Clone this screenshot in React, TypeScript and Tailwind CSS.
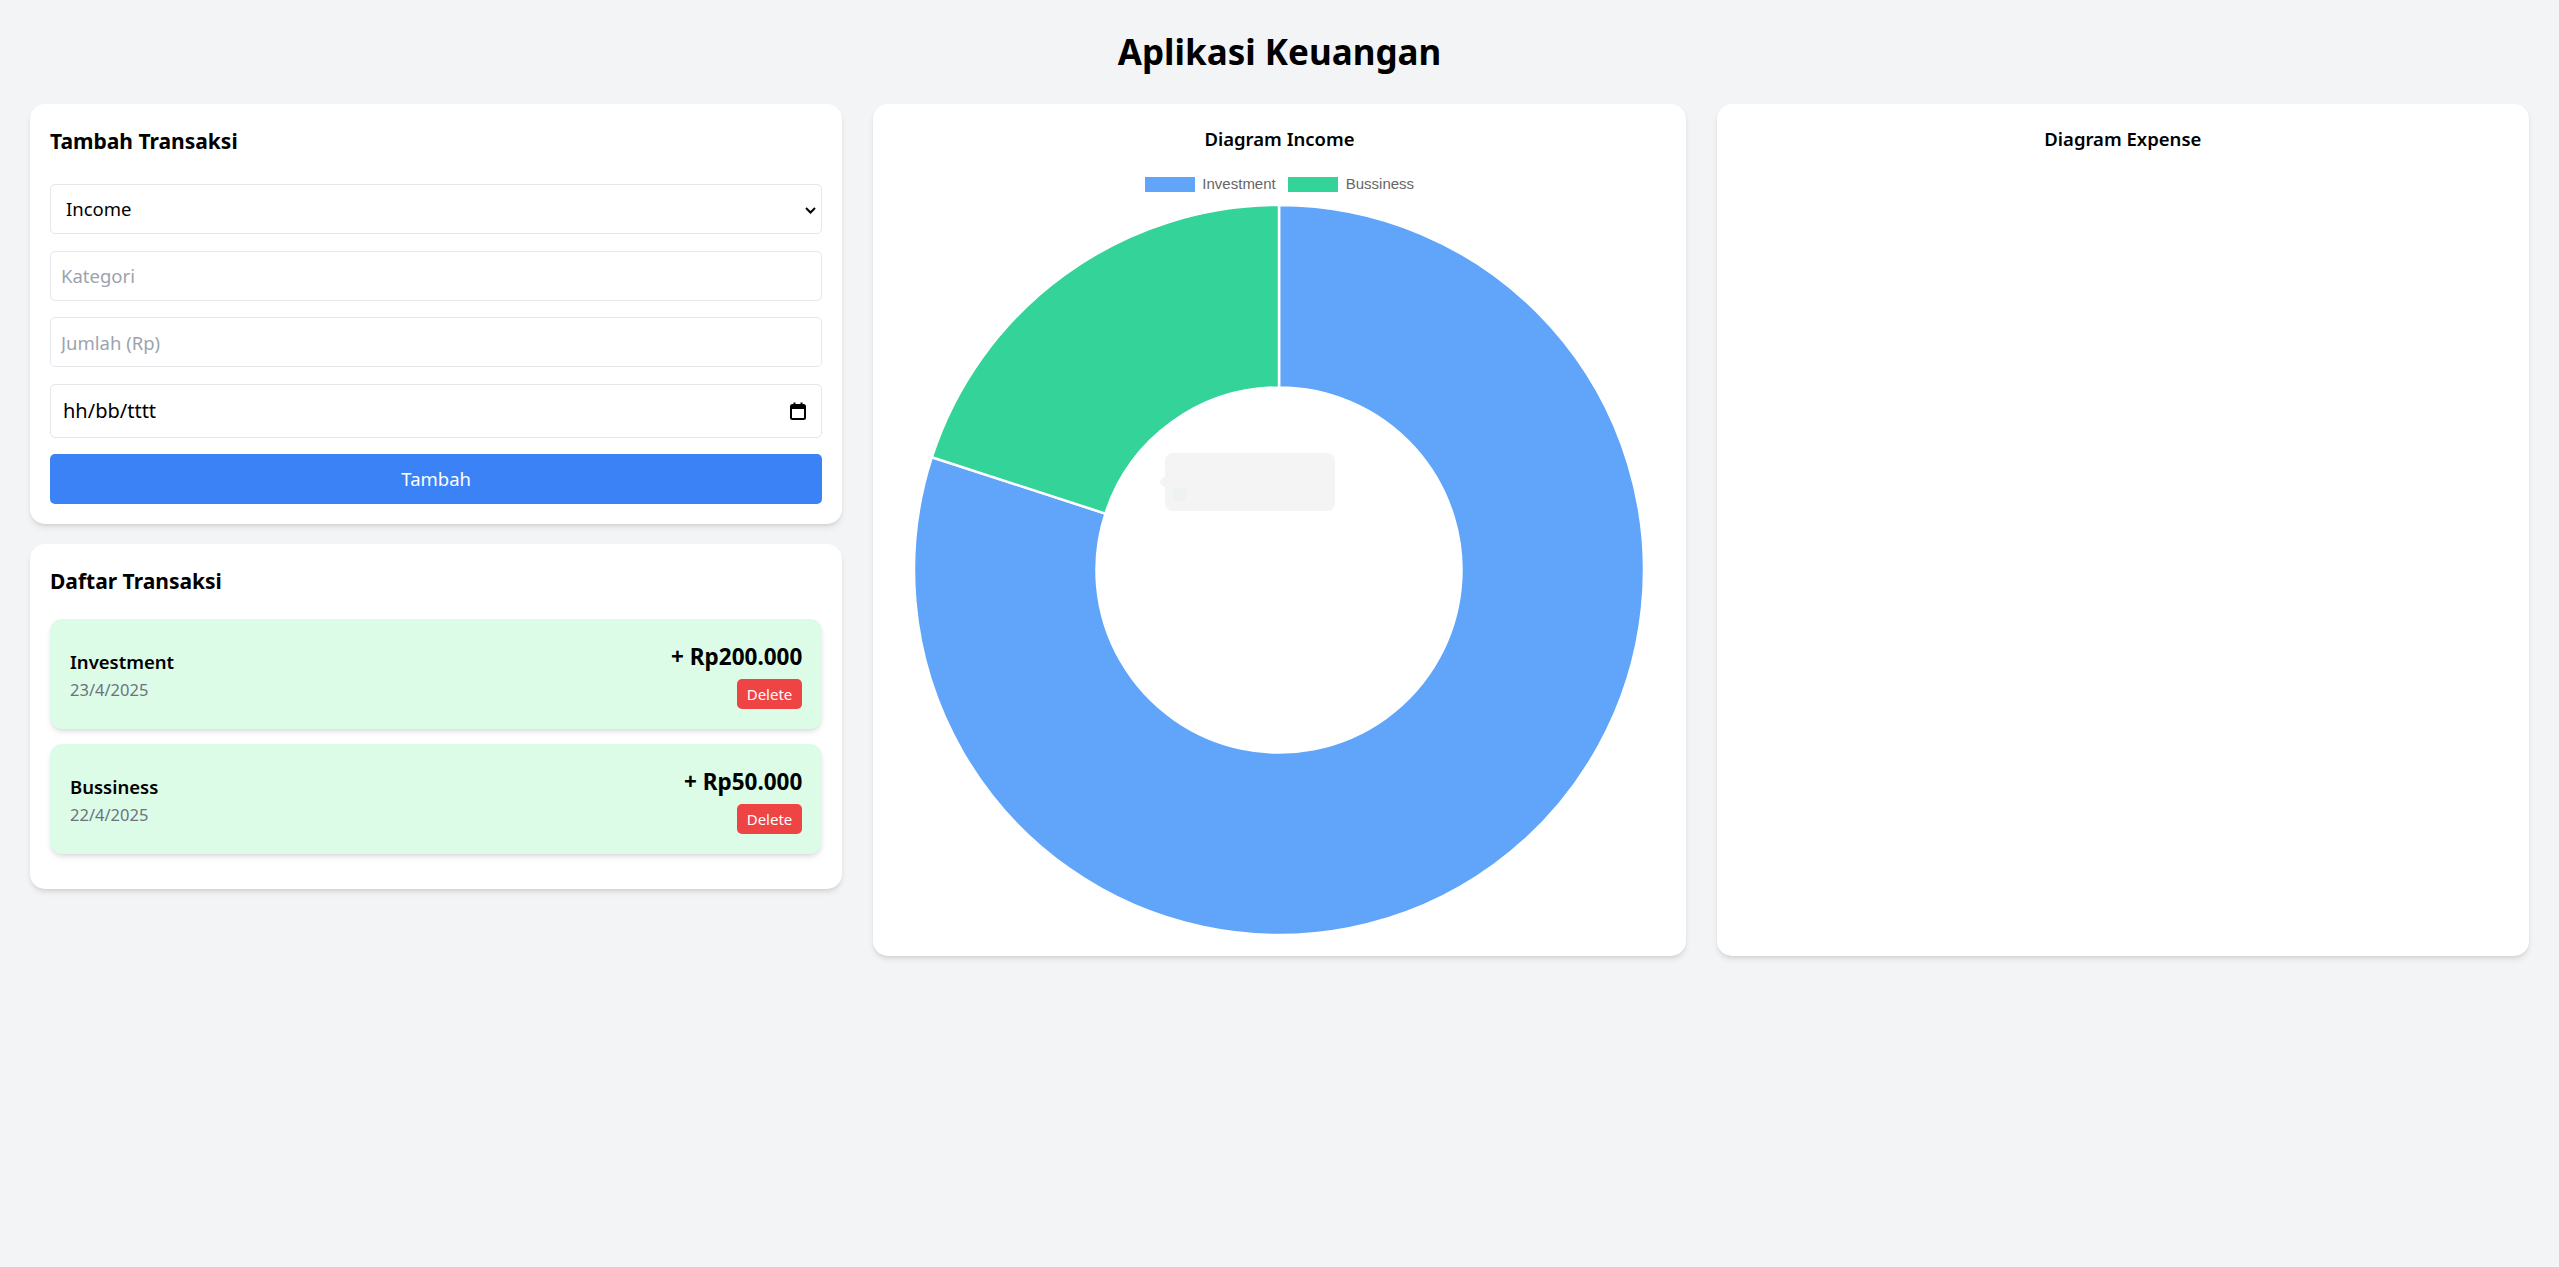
import React from "react";

const transactions = [
  { name: "Investment", date: "23/4/2025", amount: "+ Rp200.000" },
  { name: "Bussiness", date: "22/4/2025", amount: "+ Rp50.000" },
];

function CalendarIcon() {
  return (
    <svg width="16" height="18" viewBox="0 0 16 18">
      <rect x="1" y="3" width="14" height="14" rx="1.5" fill="none" stroke="black" strokeWidth="2" />
      <rect x="1" y="3" width="14" height="4" fill="black" />
      <rect x="3.5" y="0.5" width="2" height="3" fill="black" />
      <rect x="10.5" y="0.5" width="2" height="3" fill="black" />
    </svg>
  );
}

function Donut() {
  return (
    <div className="relative w-[732px] h-[732px] mx-auto">
      <svg width="732" height="732" viewBox="0 0 732 732">
        <path
          d="M366 1 A365 365 0 1 1 18.86 253.21 L192.43 309.6 A182.5 182.5 0 1 0 366 183.5 Z"
          fill="#60a5fa"
          stroke="#ffffff"
          strokeWidth="2.5"
        />
        <path
          d="M18.86 253.21 A365 365 0 0 1 366 1 L366 183.5 A182.5 182.5 0 0 0 192.43 309.6 Z"
          fill="#34d399"
          stroke="#ffffff"
          strokeWidth="2.5"
        />
      </svg>
      <div className="absolute left-[252px] top-[249px] w-[170px] h-[58px] rounded-[8px] bg-[#f4f4f4]">
        <div className="absolute left-[-6px] top-[23px] w-0 h-0 border-y-[6px] border-y-transparent border-r-[6px] border-r-[#f4f4f4]" />
        <div className="absolute left-[8px] top-[35px] w-[13px] h-[13px] bg-[#eef2f0]" />
      </div>
    </div>
  );
}

export default function App() {
  return (
    <div className="min-h-screen bg-[#f3f4f6] p-[30px] font-['Noto_Sans',sans-serif] text-black">
      <h1 className="text-center text-[35px] leading-[44px] font-bold mb-[30px]">Aplikasi Keuangan</h1>
      <div className="grid grid-cols-3 gap-[31px]">
        <div className="flex flex-col gap-[20px]">
          <div className="bg-white rounded-[15px] shadow-md p-[20px]">
            <h2 className="text-[21px] leading-[35px] font-bold mb-[25px]">Tambah Transaksi</h2>
            <div className="flex flex-col gap-[16.5px]">
              <div className="relative">
                <select
                  defaultValue="Income"
                  className="appearance-none w-full h-[50px] border border-[#e5e7eb] rounded-[5px] pl-[15px] text-[18.5px] bg-white outline-none"
                >
                  <option value="Income">Income</option>
                  <option value="Expense">Expense</option>
                </select>
                <svg
                  className="absolute right-[6px] top-[23px] pointer-events-none"
                  width="11"
                  height="7"
                  viewBox="0 0 11 7"
                >
                  <path d="M1 1 L5.5 5.5 L10 1" fill="none" stroke="black" strokeWidth="2" />
                </svg>
              </div>
              <input
                placeholder="Kategori"
                className="w-full h-[50px] border border-[#e5e7eb] rounded-[5px] px-[10px] text-[18.5px] placeholder:text-[#9ca3af] outline-none"
              />
              <input
                placeholder="Jumlah (Rp)"
                className="w-full h-[50px] border border-[#e5e7eb] rounded-[5px] px-[10px] text-[18.5px] placeholder:text-[#9ca3af] outline-none"
              />
              <div className="w-full h-[54px] border border-[#e5e7eb] rounded-[5px] pl-[12px] pr-[15px] flex items-center justify-between text-[20px]">
                <span>hh/bb/tttt</span>
                <CalendarIcon />
              </div>
              <button className="w-full h-[50px] bg-[#3b82f6] text-white rounded-[5px] text-[18.5px]">Tambah</button>
            </div>
          </div>
          <div className="bg-white rounded-[15px] shadow-md p-[20px]">
            <h2 className="text-[21px] leading-[35px] font-bold mb-[20px]">Daftar Transaksi</h2>
            {transactions.map((t) => (
              <div
                key={t.name}
                className="bg-[#dcfce7] rounded-[12px] shadow-md p-[20px] mb-[15px] flex items-center justify-between"
              >
                <div>
                  <div className="text-[18.5px] leading-[30px] font-semibold">{t.name}</div>
                  <div className="text-[16.5px] leading-[25px] text-[#6b7280]">{t.date}</div>
                </div>
                <div className="flex flex-col items-end">
                  <div className="text-[22.5px] leading-[35px] font-bold">{t.amount}</div>
                  <button className="mt-[5px] bg-[#ef4444] text-white text-[15px] leading-[25px] px-[10px] py-[2.5px] rounded-[5px]">
                    Delete
                  </button>
                </div>
              </div>
            ))}
          </div>
        </div>
        <div className="bg-white rounded-[15px] shadow-md p-[20px]">
          <h3 className="text-center text-[18.5px] leading-[30px] font-semibold mb-[10px]">Diagram Income</h3>
          <div className="h-[40px] pt-[12.5px] flex justify-center gap-[12.5px] font-['Liberation_Sans',Arial,sans-serif] text-[15px] text-[#666666]">
            <div className="flex items-center gap-[7.5px] h-[15px]">
              <span className="w-[50px] h-[15px] bg-[#60a5fa]" />
              <span>Investment</span>
            </div>
            <div className="flex items-center gap-[7.5px] h-[15px]">
              <span className="w-[50px] h-[15px] bg-[#34d399]" />
              <span>Bussiness</span>
            </div>
          </div>
          <Donut />
        </div>
        <div className="bg-white rounded-[15px] shadow-md p-[20px]">
          <h3 className="text-center text-[18.5px] leading-[30px] font-semibold">Diagram Expense</h3>
        </div>
      </div>
    </div>
  );
}
